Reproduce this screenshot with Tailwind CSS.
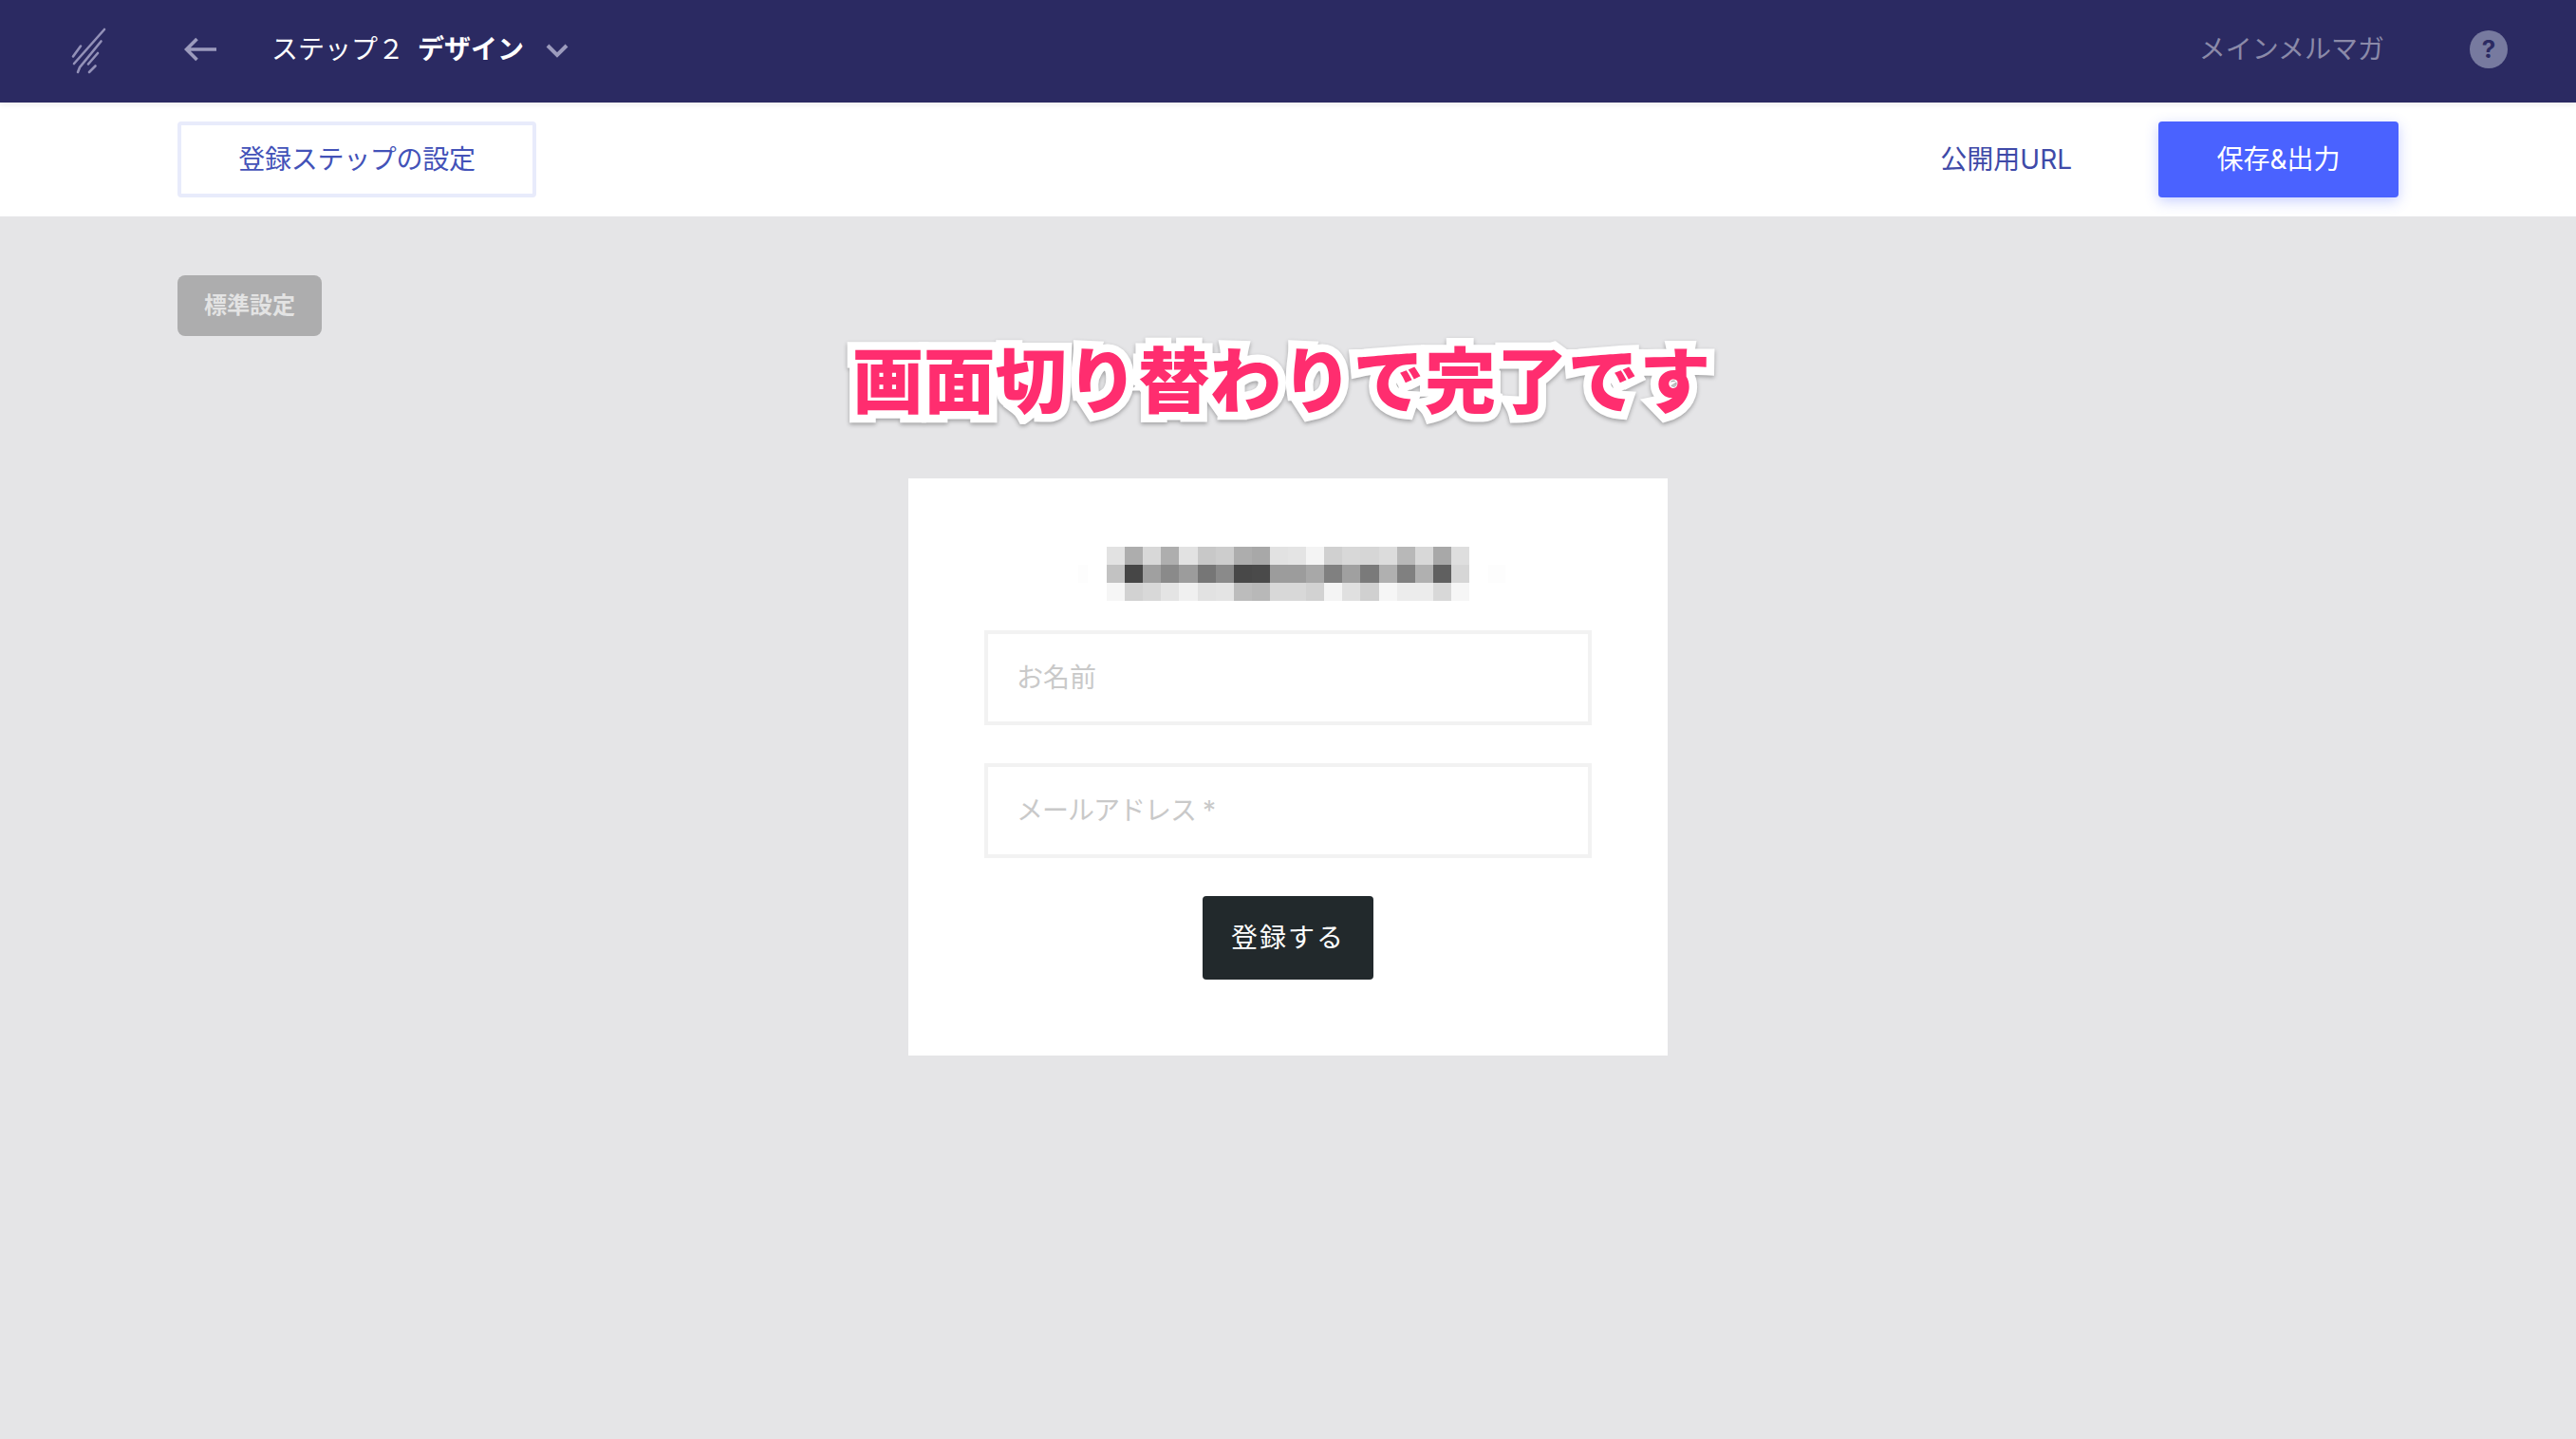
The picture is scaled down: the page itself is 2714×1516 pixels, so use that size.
<!DOCTYPE html>
<html lang="ja">
<head>
<meta charset="utf-8">
<script src="https://cdn.jsdelivr.net/npm/@tailwindcss/browser@4"></script>
<title>ステップ２ デザイン</title>
</head>
<body class="m-0 bg-[#e5e5e7] font-['Inter','Noto_Sans_CJK_JP',sans-serif]">
<div class="relative flex h-[1516px] w-[2714px] flex-col overflow-hidden">
  <header class="relative z-10 flex h-[108px] shrink-0 items-center bg-[#2b2a62] pb-[4px] pl-[74px] pr-[72px] shadow-[0_2px_6px_rgba(0,0,0,0.08)]">
    <svg class="mt-[2px] h-[50px] w-[38px]" viewBox="74 28 38 50" fill="none" stroke="#9391b8" stroke-width="2.6" stroke-linecap="round">
      <path d="M110 31 78 67M85 48.500 77 59.500M106.500 43.500 84 71 82 76M103 56 93 67.500M100.500 69.500 94 76"/>
    </svg>
    <svg class="ml-[82px] h-[26px] w-[35px]" viewBox="0 0 35 26" fill="none" stroke="#9c9bbd" stroke-width="3.600">
      <path d="M34 13H3M13.500 2 2.500 13l11 11"/>
    </svg>
    <div class="ml-[57px] flex items-center text-[28px] leading-none text-white">
      <span>ステップ２</span>
      <span class="ml-[14px] font-bold">デザイン</span>
      <svg class="ml-[23px] mt-[2px] h-[15px] w-[24px]" viewBox="0 0 24 15" fill="none" stroke="#9c9bbd" stroke-width="4"><path d="M2 2l10 10L22 2"/></svg>
    </div>
    <div class="ml-auto flex items-center">
      <span class="text-[28px] leading-none text-[#8b8aa9]">メインメルマガ</span>
      <div class="ml-[90px] flex h-[40px] w-[40px] items-center justify-center rounded-full bg-[#777a9f] text-[26px] font-bold leading-none text-[#2b2a62]">?</div>
    </div>
  </header>

  <nav class="flex h-[120px] shrink-0 items-center bg-white pl-[187px] pr-[187px]">
    <a class="flex h-[80px] w-[378px] items-center justify-center rounded-[4px] border-[4px] border-[#e8ebfb] text-[28px] leading-none tracking-[-0.3px] text-[#4352b8]">登録ステップの設定</a>
    <a class="ml-auto text-[28px] leading-none text-[#3f4aa8]">公開用URL</a>
    <a class="ml-[91px] flex h-[80px] w-[253px] items-center justify-center rounded-[4px] bg-[#4a62ff] text-[28px] leading-none text-white shadow-[0_4px_14px_rgba(74,98,255,0.3)]">保存&amp;出力</a>
  </nav>

  <main class="relative flex-1">
    <div class="ml-[187px] mt-[62px] flex h-[64px] w-[152px] items-center justify-center rounded-[8px] bg-[#adadae] text-[24px] font-bold leading-none text-[#e3e3e3]">標準設定</div>

    <div class="mx-auto mt-[150px] flex h-[608px] w-[800px] flex-col items-center bg-white pt-[72px]">
      <div class="relative grid h-[57px] w-[382px] grid-cols-[repeat(20,1fr)] grid-rows-3">
        <i class="bg-[#e2e2e2]"></i><i class="bg-[#adadad]"></i><i class="bg-[#d8d8d8]"></i><i class="bg-[#aeaeae]"></i><i class="bg-[#e2e2e2]"></i><i class="bg-[#c8c8c8]"></i><i class="bg-[#cdcdcd]"></i><i class="bg-[#adadad]"></i><i class="bg-[#a8a8a8]"></i><i class="bg-[#e2e2e2]"></i><i class="bg-[#e4e4e4]"></i><i class="bg-[#f4f4f4]"></i><i class="bg-[#d0d0d0]"></i><i class="bg-[#d8d8d8]"></i><i class="bg-[#d6d6d6]"></i><i class="bg-[#dcdcdc]"></i><i class="bg-[#b8b8b8]"></i><i class="bg-[#d8d8d8]"></i><i class="bg-[#a8a8a8]"></i><i class="bg-[#dedede]"></i>
        <i class="bg-[#c2c2c2]"></i><i class="bg-[#464646]"></i><i class="bg-[#a0a0a0]"></i><i class="bg-[#8a8a8a]"></i><i class="bg-[#9c9c9c]"></i><i class="bg-[#767676]"></i><i class="bg-[#8a8a8a]"></i><i class="bg-[#484848]"></i><i class="bg-[#4a4a4a]"></i><i class="bg-[#9c9c9c]"></i><i class="bg-[#9c9c9c]"></i><i class="bg-[#a8a8a8]"></i><i class="bg-[#808080]"></i><i class="bg-[#a0a0a0]"></i><i class="bg-[#7a7a7a]"></i><i class="bg-[#b0b0b0]"></i><i class="bg-[#808080]"></i><i class="bg-[#b0b0b0]"></i><i class="bg-[#606060]"></i><i class="bg-[#d6d6d6]"></i>
        <i class="bg-[#f6f6f6]"></i><i class="bg-[#d2d2d2]"></i><i class="bg-[#d8d8d8]"></i><i class="bg-[#e4e4e4]"></i><i class="bg-[#f0f0f0]"></i><i class="bg-[#e2e2e2]"></i><i class="bg-[#e4e4e4]"></i><i class="bg-[#bcbcbc]"></i><i class="bg-[#b8b8b8]"></i><i class="bg-[#d8d8d8]"></i><i class="bg-[#d8d8d8]"></i><i class="bg-[#d2d2d2]"></i><i class="bg-[#f4f4f4]"></i><i class="bg-[#e0e0e0]"></i><i class="bg-[#d0d0d0]"></i><i class="bg-[#f6f6f6]"></i><i class="bg-[#ececec]"></i><i class="bg-[#ececec]"></i><i class="bg-[#d8d8d8]"></i><i class="bg-[#f6f6f6]"></i>
        <i class="absolute left-[-30px] top-[19px] h-[19px] w-[10px] bg-[#fdfdfd]"></i>
        <i class="absolute right-[-38px] top-[19px] h-[19px] w-[18px] bg-[#fdfdfd]"></i>
      </div>
      <div class="mt-[31px] flex h-[100px] w-[640px] items-center border-[4px] border-[#f2f2f2] pl-[30px] text-[28px] leading-none text-[#c9c9c9]">お名前</div>
      <div class="mt-[40px] flex h-[100px] w-[640px] items-center border-[4px] border-[#f2f2f2] pl-[30px] text-[28px] leading-none tracking-[-1px] text-[#c9c9c9]">メールアドレス *</div>
      <button class="mt-[40px] flex h-[88px] w-[180px] items-center justify-center rounded-[4px] bg-[#22292c] text-[28px] leading-none tracking-[2px] text-white">登録する</button>
    </div>

    <div class="absolute left-[-14px] right-0 top-[126px] text-center text-[75.400px] font-black leading-[96px] text-[#ff2d6f] [-webkit-text-stroke:17px_white] [paint-order:stroke_fill] [filter:drop-shadow(0_2px_2px_rgba(0,0,0,0.3))]">画面切り替わりで完了です</div>
  </main>
</div>
</body>
</html>
